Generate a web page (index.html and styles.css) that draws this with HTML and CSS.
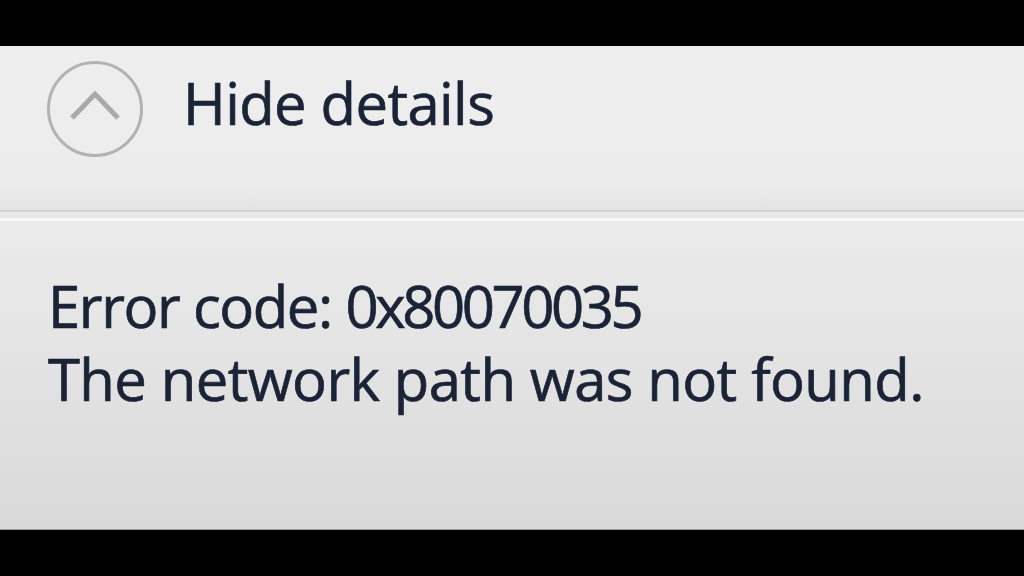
FILE: index.html
```html
<!DOCTYPE html>
<html>
<head>
<meta charset="utf-8">
<link rel="stylesheet" href="styles.css">
</head>
<body>
<div class="bar-top"></div>
<main class="panel">
  <section class="details-toggle">
    <span class="circle-btn">
      <svg width="100" height="100" viewBox="0 0 100 100">
        <circle cx="50" cy="50" r="46.5" fill="none" stroke="#b2b2b2" stroke-width="3"/>
        <polyline points="27,59 50,35 73,59" fill="none" stroke="#a9a9a9" stroke-width="5" stroke-linejoin="miter"/>
      </svg>
    </span>
    <span class="toggle-label">Hide details</span>
  </section>
  <div class="separator"></div>
  <section class="error-info">
    <p class="line line-code">Error code: <span class="code">0x80070035</span></p>
    <p class="line">The network path was not found.</p>
  </section>
</main>
<div class="bar-bottom"></div>
</body>
</html>
```
FILE: styles.css
```css
html, body {
  margin: 0;
  padding: 0;
  background: #000;
  width: 1024px;
  height: 576px;
  overflow: hidden;
}
.bar-top {
  height: 46px;
  background: #000;
}
.bar-bottom {
  height: 46px;
  background: #000;
  border-top: 1px solid #9a9a9a;
}
.panel {
  height: 483px;
  display: flex;
  flex-direction: column;
  background: linear-gradient(#eeeeee 0%, #ebebeb 35%, #e6e6e6 55%, #d9d9d9 100%);
  font-family: "Open Sans", "Noto Sans", sans-serif;
  color: #1b2336;
}
.details-toggle {
  height: 164px;
  display: flex;
  align-items: flex-start;
  padding-left: 45px;
  box-sizing: border-box;
  padding-top: 13px;
  background: linear-gradient(#eeeeee 0%, #ececec 85%, #e3e3e3 100%);
}
.circle-btn {
  display: block;
  width: 100px;
  height: 100px;
}
.circle-btn svg { display: block; }
.toggle-label {
  font-size: 58px;
  line-height: 60px;
  margin-left: 38px;
  margin-top: 14px;
  letter-spacing: -0.6px;
  -webkit-text-stroke: 0.7px #1b2336;
}
.separator {
  height: 11px;
  flex: none;
  background: linear-gradient(#d2d2d2 0px, #d2d2d2 2px, #e7e7e7 2px, #e7e7e7 8px, #f7f7f7 8px, #f7f7f7 11px);
}
.error-info {
  padding: 48px 0 0 48px;
}
.line {
  margin: 0;
  font-size: 58px;
  line-height: 73px;
  letter-spacing: -0.6px;
  -webkit-text-stroke: 0.7px #1b2336;
}
.line-code {
  letter-spacing: -1.4px;
}
.code {
  letter-spacing: -3.4px;
}
```
